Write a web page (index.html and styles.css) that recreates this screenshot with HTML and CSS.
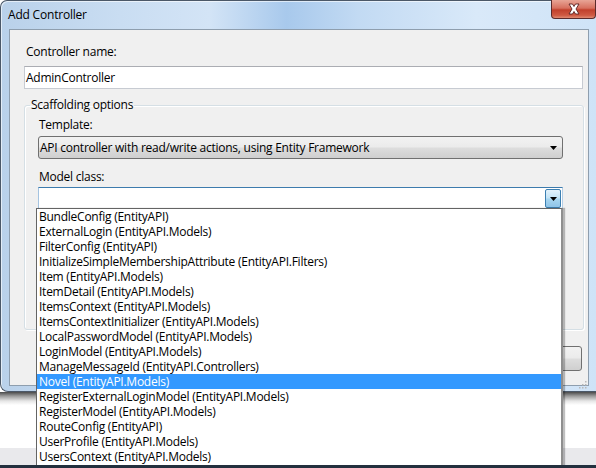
FILE: index.html
```html
<!DOCTYPE html>
<html>
<head>
<meta charset="utf-8">
<link rel="stylesheet" href="styles.css">
</head>
<body>
<div class="screen">
  <div class="window">
    <div class="titlebar">
      <span class="title">Add Controller</span>
      <div class="close">
        <svg width="18" height="12" viewBox="0 0 18 12"><path d="M4 1 L7.5 1 L9 3.5 L10.5 1 L14 1 L11 6 L14 11 L10.5 11 L9 8.5 L7.5 11 L4 11 L7 6 Z" fill="#fff" stroke="#5a2020" stroke-width="0.9"/></svg>
      </div>
    </div>
    <div class="client">
      <div class="label">Controller name:</div>
      <div class="textbox">AdminController</div>
      <fieldset class="group">
        <legend>Scaffolding options</legend>
        <div class="label inner">Template:</div>
        <div class="combo">
          <span class="combo-text">API controller with read/write actions, using Entity Framework</span>
          <svg class="arrow" width="7" height="4" viewBox="0 0 7 4"><path d="M0 0 H7 L3.5 4 Z" fill="#000"/></svg>
        </div>
        <div class="label inner second">Model class:</div>
        <div class="combo edit">
          <span class="combo-text"></span>
          <span class="dropbtn"><svg width="7" height="4" viewBox="0 0 7 4"><path d="M0 0 H7 L3.5 4 Z" fill="#000"/></svg></span>
        </div>
      </fieldset>
      <div class="buttons">
        <div class="button">Add</div>
        <div class="button">Cancel</div>
      </div>
      <div class="grip">
        <svg width="8" height="8" viewBox="0 0 8 8"><g fill="#b8b8b8"><rect x="6" y="0" width="1.5" height="1.5"/><rect x="3" y="3" width="1.5" height="1.5"/><rect x="6" y="3" width="1.5" height="1.5"/><rect x="0" y="6" width="1.5" height="1.5"/><rect x="3" y="6" width="1.5" height="1.5"/><rect x="6" y="6" width="1.5" height="1.5"/></g></svg>
      </div>
    </div>
  </div>
  <div class="desktop"></div>
  <div class="strip"></div>
  <div class="taskbar"></div>
  <ul class="list">
    <li>BundleConfig (EntityAPI)</li>
    <li>ExternalLogin (EntityAPI.Models)</li>
    <li>FilterConfig (EntityAPI)</li>
    <li>InitializeSimpleMembershipAttribute (EntityAPI.Filters)</li>
    <li>Item (EntityAPI.Models)</li>
    <li>ItemDetail (EntityAPI.Models)</li>
    <li>ItemsContext (EntityAPI.Models)</li>
    <li>ItemsContextInitializer (EntityAPI.Models)</li>
    <li>LocalPasswordModel (EntityAPI.Models)</li>
    <li>LoginModel (EntityAPI.Models)</li>
    <li>ManageMessageId (EntityAPI.Controllers)</li>
    <li class="selected">Novel (EntityAPI.Models)</li>
    <li>RegisterExternalLoginModel (EntityAPI.Models)</li>
    <li>RegisterModel (EntityAPI.Models)</li>
    <li>RouteConfig (EntityAPI)</li>
    <li>UserProfile (EntityAPI.Models)</li>
    <li>UsersContext (EntityAPI.Models)</li>
  </ul>
</div>
</body>
</html>
```
FILE: styles.css
```css
* { box-sizing: border-box; }
html, body { margin: 0; padding: 0; }
body {
  width: 596px;
  height: 468px;
  overflow: hidden;
  font-family: "Open Sans", "Noto Sans", sans-serif;
  font-size: 12px;
  color: #000;
  background: #fff;
}
.screen {
  position: relative;
  width: 596px;
  height: 468px;
  display: flex;
  flex-direction: column;
}
.window {
  width: 596px;
  height: 392px;
  flex: none;
  display: flex;
  flex-direction: column;
  padding: 0 7px 5px 8px;
  border: 1px solid #4b5868;
  border-right: none;
  border-radius: 7px 0 0 8px;
  background: linear-gradient(to right, #b9d1ea 0%, #c9ddf2 20%, #d3e4f6 35%, #a8c9ec 48%, #c2daf3 60%, #d9e9f9 80%, #cfe3f7 100%);
  box-shadow: inset 1px 1px 0 rgba(255,255,255,0.6);
}
.titlebar {
  height: 28px;
  flex: none;
  display: flex;
  align-items: flex-start;
  margin-left: -8px;
  margin-right: -7px;
  padding-left: 7px;
}
.title {
  margin-top: 6px;
  line-height: 16px;
  font-size: 12px;
  color: #000;
  letter-spacing: -0.2px;
}
.close {
  margin-left: auto;
  width: 45px;
  height: 19px;
  margin-top: -1px;
  border: 1px solid #5b2b2b;
  border-top: none;
  border-radius: 0 0 4px 4px;
  background: linear-gradient(to bottom, #e8a596 0%, #d7705f 45%, #c1402c 55%, #cf5a43 85%, #e08a72 100%);
  display: flex;
  align-items: center;
  justify-content: center;
}
.client {
  flex: 1;
  position: relative;
  background: #f0f0f0;
  border: 1px solid #8e9eae;
  padding: 14px 0 0 14px;
  display: flex;
  flex-direction: column;
}
.label {
  line-height: 16px;
  margin-left: 2px;
  letter-spacing: -0.25px;
}
.textbox {
  margin-top: 6px;
  width: 559px;
  height: 23px;
  background: #fff;
  border: 1px solid #c7cbd2;
  border-top-color: #abadb3;
  padding: 2px 1px;
  line-height: 17px;
  letter-spacing: -0.25px;
}
.group {
  margin: 8px 0 0 0;
  width: 560px;
  height: 233px;
  border: 1px solid #d5dfe5;
  border-radius: 3px;
  padding: 4px 20px 0 13px;
  box-shadow: inset 1px 1px 0 #fff, 1px 1px 0 #fff;
}
.group legend {
  margin-left: -8px;
  padding: 0 1px;
  line-height: 16px;
  letter-spacing: -0.25px;
}
.label.inner { margin-left: 1px; }
.label.second { margin-top: 10px; }
.combo {
  margin-top: 3px;
  height: 23px;
  width: 525px;
  display: flex;
  align-items: center;
  border: 1px solid #707070;
  border-radius: 3px;
  background: linear-gradient(to bottom, #f2f2f2 0%, #ebebeb 48%, #dddddd 52%, #cfcfcf 100%);
  padding: 0 0 0 1px;
}
.combo-text {
  flex: 1;
  letter-spacing: -0.25px;
  line-height: 16px;
}
.combo .arrow { margin-right: 5px; }
.combo.edit {
  margin-top: 2px;
  border-radius: 0;
  background: #fff;
  border-color: #3d7bad #b5cfe7 #b5cfe7 #a4c3e0;
  padding: 0;
  align-items: stretch;
}
.dropbtn {
  width: 16px;
  flex: none;
  margin: 1px 1px 1px 0;
  border: 1px solid #3c7fb1;
  border-radius: 2px;
  background: linear-gradient(to bottom, #e3f2fb 0%, #c4e4f6 45%, #a6d5f0 55%, #8fc4e8 100%);
  display: flex;
  align-items: center;
  justify-content: center;
}
.buttons {
  display: flex;
  gap: 8px;
  justify-content: flex-end;
  width: 558px;
  margin-top: 16px;
}
.button {
  width: 75px;
  height: 25px;
  border: 1px solid #707070;
  border-radius: 3px;
  background: linear-gradient(to bottom, #f2f2f2 0%, #ebebeb 48%, #dddddd 52%, #cfcfcf 100%);
  display: flex;
  align-items: center;
  justify-content: center;
}
.grip {
  position: absolute;
  right: 0;
  bottom: 0;
  width: 9px;
  height: 9px;
}
.desktop {
  height: 56px;
  flex: none;
  background: linear-gradient(to bottom, #4a4a4a 0px, #9a9a9a 4px, #e6e6e6 9px, #ffffff 13px);
}
.strip {
  height: 17px;
  flex: none;
  background: #e9e9ec;
}
.taskbar {
  height: 3px;
  flex: none;
  background: #23303e;
  position: relative;
  z-index: 2;
}
.list {
  position: absolute;
  left: 36px;
  top: 208px;
  width: 527px;
  height: 257px;
  margin: 0;
  padding: 0;
  list-style: none;
  background: #fff;
  border: 1px solid #646464;
  border-right: 2px solid #8f8f8f;
  border-bottom: none;
  box-shadow: 2px 0 1px rgba(0,0,0,0.25);
  z-index: 1;
}
.list li {
  height: 15px;
  line-height: 15px;
  padding-left: 2px;
  letter-spacing: -0.25px;
  white-space: nowrap;
}
.list li.selected {
  background: #3399ff;
  color: #fff;
}
```
